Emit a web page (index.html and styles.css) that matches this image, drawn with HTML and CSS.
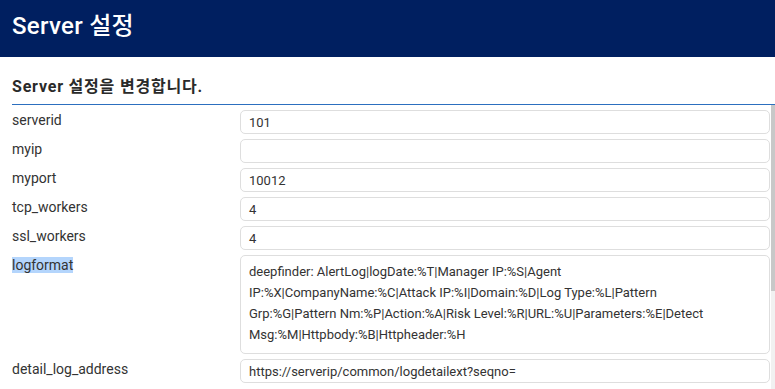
FILE: index.html
```html
<!DOCTYPE html>
<html lang="ko">
<head>
<meta charset="utf-8">
<title>Server 설정</title>
<link rel="stylesheet" href="styles.css">
</head>
<body>
<header class="page-header">
  <h1 class="page-title">Server 설정</h1>
</header>
<main class="content">
  <h2 class="section-title">Server 설정을 변경합니다.</h2>
  <div class="form-wrap">
    <div class="form-rows">
      <div class="row">
        <label class="label">serverid</label>
        <div class="field">101</div>
      </div>
      <div class="row">
        <label class="label">myip</label>
        <div class="field"></div>
      </div>
      <div class="row">
        <label class="label">myport</label>
        <div class="field">10012</div>
      </div>
      <div class="row">
        <label class="label">tcp_workers</label>
        <div class="field">4</div>
      </div>
      <div class="row">
        <label class="label">ssl_workers</label>
        <div class="field">4</div>
      </div>
      <div class="row">
        <label class="label"><span class="selected">logformat</span></label>
        <div class="field field-area">deepfinder: AlertLog|logDate:%T|Manager IP:%S|Agent IP:%X|CompanyName:%C|Attack IP:%I|Domain:%D|Log Type:%L|Pattern Grp:%G|Pattern Nm:%P|Action:%A|Risk Level:%R|URL:%U|Parameters:%E|Detect Msg:%M|Httpbody:%B|Httpheader:%H</div>
      </div>
      <div class="row">
        <label class="label">detail_log_address</label>
        <div class="field">https://serverip/common/logdetailext?seqno=</div>
      </div>
    </div>
    <div class="scrollbar"><div class="thumb"></div></div>
  </div>
</main>
</body>
</html>
```
FILE: styles.css
```css
html, body {
  margin: 0;
  padding: 0;
  background: #ffffff;
  font-family: Roboto, "Noto Sans CJK KR", sans-serif;
  color: #333333;
  overflow: hidden;
}

.page-header {
  background: #001f60;
  height: 57px;
  padding: 0 12px;
  box-sizing: border-box;
}

.page-title {
  margin: 0;
  padding-top: 11px;
  font-size: 24px;
  line-height: 30px;
  font-weight: 500;
  letter-spacing: 0.3px;
  color: #ffffff;
}

.content {
  padding-left: 12px;
}

.section-title {
  margin: 0;
  padding-top: 18px;
  padding-bottom: 5px;
  font-size: 16px;
  line-height: 24px;
  font-weight: 700;
  letter-spacing: 0.8px;
  color: #2a2a2a;
  border-bottom: 1px solid #2c6fbf;
}

.form-wrap {
  display: flex;
}

.form-rows {
  flex: 1;
  display: flex;
  flex-direction: column;
  gap: 5px;
  padding-top: 5px;
  padding-right: 1px;
}

.row {
  display: flex;
  align-items: flex-start;
}

.label {
  width: 228px;
  flex: none;
  font-size: 14px;
  line-height: 21px;
  color: #333333;
}

.selected {
  background: #b4d5fc;
}

.field {
  flex: 1;
  box-sizing: border-box;
  height: 24px;
  border: 1px solid #dedede;
  border-radius: 5px;
  padding: 0 8px;
  font-size: 13px;
  line-height: 23px;
  color: #333333;
  background: #ffffff;
}

.field-area {
  height: 99px;
  padding: 5px 40px 8px 8px;
  line-height: 21px;
}

.scrollbar {
  width: 4px;
  flex: none;
  background: #f1f1f1;
  height: 290px;
}

.thumb {
  height: 186px;
  background: #c8c8c8;
}
```
